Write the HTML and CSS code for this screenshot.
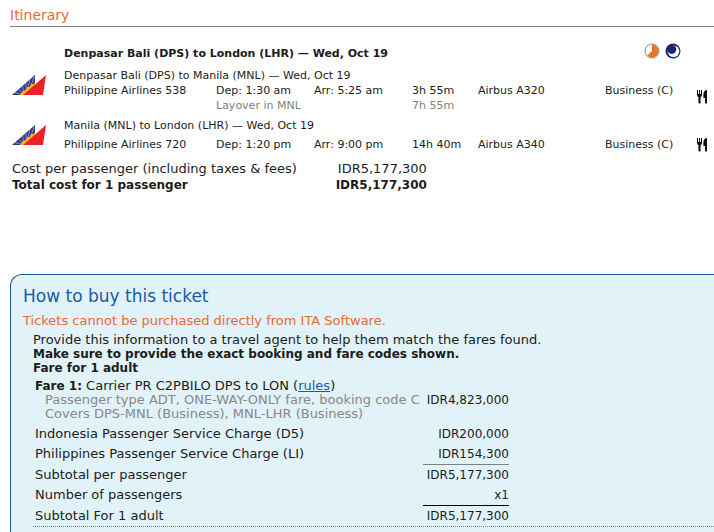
FILE: index.html
```
<!DOCTYPE html>
<html lang="en">
<head>
    <meta charset="UTF-8">
    <meta name="viewport" content="width=device-width, initial-scale=1.0">
    <title>Itinerary</title>
    <link rel="stylesheet" href="styles.css">
</head>
<body>
    <!-- Shared icons -->
    <svg class="sprite" aria-hidden="true">
        <symbol id="airline" viewBox="0 0 35 21">
            <path d="M0 20 L23 0 V20 Z" fill="#2f3a8c"/>
            <path d="M13 20 L2 17.5 M13 20 L6 14 M13 20 L10 10.5 M14 19 L14 7 M15 18 L18 4 M17 17 L22 2" stroke="#d9c9a0" stroke-width="0.6" fill="none"/>
            <path d="M8 20 L11 16 L14 15 L15 12 L18 12 L19 9 L22 9 L23 7 V14 L15 20 Z" fill="#fbb81c"/>
            <path d="M34 0 L11 20 H31 Z" fill="#ee2028"/>
        </symbol>
        <symbol id="meal" viewBox="0 0 10 14">
            <path d="M0 0 H1 V4 H2 V0 H3 V4 H4 V0 H5 V5 Q5 7 3.6 7 V13 Q2.5 14 1.4 13 V7 Q0 7 0 5 Z" fill="#111"/>
            <path d="M10 0 V13 Q9 14 8 13 V8 H6.4 V4 Q7 0 10 0 Z" fill="#111"/>
        </symbol>
    </svg>

    <h1 class="page-title">Itinerary</h1>

    <table class="itinerary">
        <colgroup>
            <col class="col-logo">
            <col class="col-flight">
            <col class="col-time">
            <col class="col-time">
            <col class="col-duration">
            <col class="col-aircraft">
            <col class="col-cabin">
            <col class="col-meal">
        </colgroup>
        <tbody>
            <tr class="trip">
                <td></td>
                <th colspan="5">Denpasar Bali (DPS) to London (LHR) — Wed, Oct 19</th>
                <td colspan="2">
                    <div class="badges">
                        <svg width="16" height="16" viewBox="0 0 16 16" role="img" aria-label="Long layover">
                            <circle cx="8" cy="8" r="7" fill="#fff" stroke="#8a8a8a"/>
                            <path d="M8 8 V1.5 A6.5 6.5 0 1 1 3.4 12.6 Z" fill="#e67425"/>
                        </svg>
                        <svg width="16" height="16" viewBox="0 0 16 16" role="img" aria-label="Overnight flight">
                            <circle cx="8" cy="8" r="7.5" fill="#1c2674"/>
                            <circle cx="8.5" cy="8.3" r="5.8" fill="#fff"/>
                            <circle cx="6.8" cy="6.4" r="4.5" fill="#1c2674"/>
                        </svg>
                    </div>
                </td>
            </tr>
        </tbody>
        <tbody>
            <tr>
                <td rowspan="3" class="logo-cell"><svg class="airline" role="img" aria-label="Philippine Airlines"><use href="#airline"/></svg></td>
                <td colspan="6">Denpasar Bali (DPS) to Manila (MNL) — Wed, Oct 19</td>
                <td rowspan="3" class="meal-cell"><svg class="meal" role="img" aria-label="Meal"><use href="#meal"/></svg></td>
            </tr>
            <tr>
                <td>Philippine Airlines 538</td>
                <td>Dep: 1:30 am</td>
                <td>Arr: 5:25 am</td>
                <td>3h 55m</td>
                <td>Airbus A320</td>
                <td>Business (C)</td>
            </tr>
            <tr class="layover">
                <td></td>
                <td colspan="2">Layover in MNL</td>
                <td colspan="3">7h 55m</td>
            </tr>
        </tbody>
        <tbody>
            <tr class="leg-title">
                <td rowspan="2" class="last-logo-cell"><svg class="airline" role="img" aria-label="Philippine Airlines"><use href="#airline"/></svg></td>
                <td colspan="7">Manila (MNL) to London (LHR) — Wed, Oct 19</td>
            </tr>
            <tr>
                <td>Philippine Airlines 720</td>
                <td>Dep: 1:20 pm</td>
                <td>Arr: 9:00 pm</td>
                <td>14h 40m</td>
                <td>Airbus A340</td>
                <td>Business (C)</td>
                <td><svg class="meal" role="img" aria-label="Meal"><use href="#meal"/></svg></td>
            </tr>
        </tbody>
    </table>

    <table class="cost">
        <tr>
            <td>Cost per passenger (including taxes &amp; fees)</td>
            <td class="amount">IDR5,177,300</td>
        </tr>
        <tr class="total">
            <td>Total cost for 1 passenger</td>
            <td class="amount">IDR5,177,300</td>
        </tr>
    </table>

    <section class="how-to-buy">
        <h2>How to buy this ticket</h2>
        <p class="notice">Tickets cannot be purchased directly from ITA Software.</p>
        <div class="fare-info">
            <p>Provide this information to a travel agent to help them match the fares found.</p>
            <p><strong>Make sure to provide the exact booking and fare codes shown.</strong></p>
            <h3>Fare for 1 adult</h3>
            <table class="fares">
                <tr>
                    <td>
                        <strong>Fare 1:</strong> Carrier PR C2PBILO DPS to LON (<a href="#">rules</a>)
                        <div class="fare-detail">Passenger type ADT, ONE-WAY-ONLY fare, booking code C<br>Covers DPS-MNL (Business), MNL-LHR (Business)</div>
                    </td>
                    <td class="amount">IDR4,823,000</td>
                </tr>
                <tr>
                    <td>Indonesia Passenger Service Charge (D5)</td>
                    <td class="amount">IDR200,000</td>
                </tr>
                <tr>
                    <td>Philippines Passenger Service Charge (LI)</td>
                    <td class="amount">IDR154,300</td>
                </tr>
                <tr>
                    <td>Subtotal per passenger</td>
                    <td class="amount subtotal">IDR5,177,300</td>
                </tr>
                <tr>
                    <td>Number of passengers</td>
                    <td class="amount">x1</td>
                </tr>
                <tr>
                    <td>Subtotal For 1 adult</td>
                    <td class="amount grand-total">IDR5,177,300</td>
                </tr>
            </table>
        </div>
    </section>
</body>
</html>
```
FILE: styles.css
```
body {
    margin: 0;
    padding: 6px 0 0 10px;
    background: #fff;
    color: #1c1c1c;
    font-family: Verdana, "DejaVu Sans", sans-serif;
    font-size: 13px;
    line-height: 14px;
}

h1, h2, h3, p {
    margin: 0;
}

table {
    border-collapse: collapse;
}

td, th {
    padding: 0;
    text-align: left;
    white-space: nowrap;
}

svg {
    display: block;
}

strong {
    font-size: 12px;
}

.sprite {
    display: none;
}

.page-title {
    padding-bottom: 2px;
    border-bottom: 1px solid #808080;
    color: #e66b34;
    font-size: 14px;
    font-weight: normal;
    line-height: 18px;
}

/* Flight list */
.itinerary {
    table-layout: fixed;
    width: 100%;
    margin-top: 14px;
    font-size: 11px;
    line-height: 15px;
}

.col-logo { width: 54px; }
.col-flight { width: 152px; }
.col-time { width: 98px; }
.col-duration { width: 66px; }
.col-cabin { width: 90px; }
.col-meal { width: 19px; }

.trip th,
.trip td {
    height: 25px;
    padding-bottom: 2px;
    vertical-align: middle;
}

.badges {
    display: flex;
    justify-content: flex-end;
    gap: 5px;
    padding: 0 33px 6px 0;
}

.airline {
    width: 35px;
    height: 21px;
    margin-left: 2px;
}

.meal {
    width: 10px;
    height: 14px;
    margin-left: 2px;
}

.logo-cell {
    padding-top: 7px;
    vertical-align: top;
}

.last-logo-cell {
    padding-top: 12px;
    vertical-align: top;
}

.meal-cell {
    padding-top: 12px;
}

.layover {
    color: #808080;
}

.leg-title td {
    height: 24px;
}

/* Cost summary */
.cost {
    margin: 9px 0 0 2px;
    line-height: 16px;
}

.cost .amount {
    width: 130px;
}

.total {
    font-size: 12px;
    font-weight: bold;
}

.amount {
    text-align: right;
}

/* Ticket panel */
.how-to-buy {
    margin-top: 81px;
    padding: 11px 0 24px 12px;
    border: 1px solid #0f5ba7;
    border-right: none;
    border-radius: 12px 0 0 12px;
    background: #e1f2f8;
}

.how-to-buy h2 {
    color: #185ba8;
    font-size: 17px;
    font-weight: normal;
    line-height: 20px;
}

.notice {
    padding: 8px 0 5px;
    color: #e66b34;
}

.fare-info {
    margin-left: 10px;
    border-bottom: 1px dotted #808080;
}

.fare-info h3 {
    font-size: 12px;
}

.fares {
    margin: 1px 0 0 2px;
}

.fares td {
    padding: 3px 0;
}

.fares .amount {
    width: 86px;
    font-size: 12px;
}

.fares a {
    color: #185ba8;
}

.fare-detail {
    width: 378px;
    padding-left: 10px;
    color: #888;
}

.fares .subtotal {
    border-top: 1px solid #808080;
}

.fares .grand-total {
    border-top: 1px solid #000;
}
```
